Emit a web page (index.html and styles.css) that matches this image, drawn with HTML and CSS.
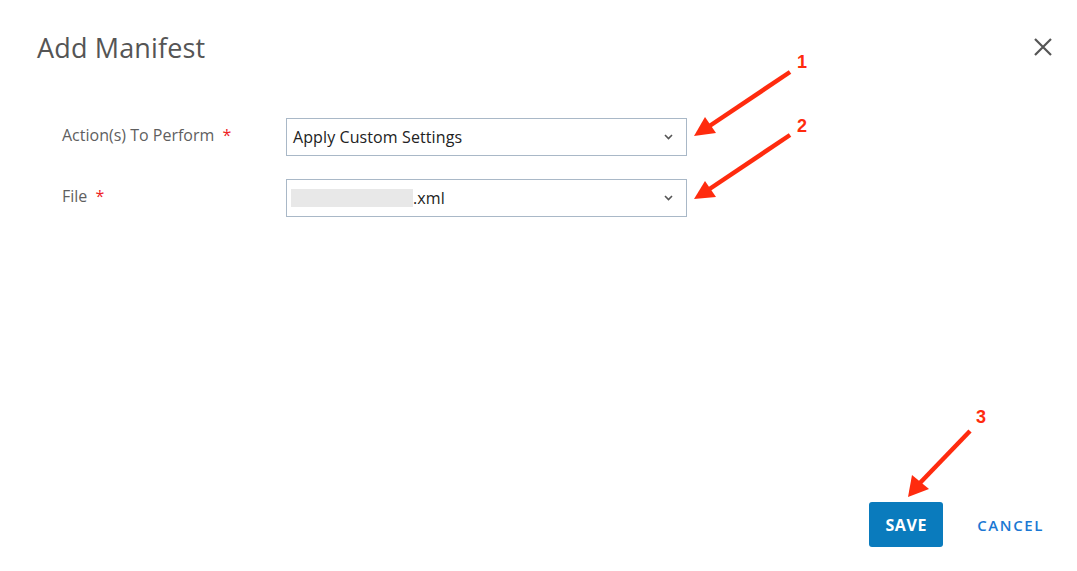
FILE: index.html
```html
<!DOCTYPE html>
<html lang="en">
<head>
<meta charset="utf-8">
<title>Add Manifest</title>
<link rel="stylesheet" href="styles.css">
</head>
<body>
<div class="dialog">
  <header class="dialog-header">
    <h1 class="dialog-title">Add Manifest</h1>
    <button class="close-btn" aria-label="Close">
      <svg width="18" height="18" viewBox="0 0 18 18"><path d="M1 1 L17 17 M17 1 L1 17" stroke="#555" stroke-width="2.2" fill="none"/></svg>
    </button>
  </header>

  <form class="form">
    <div class="form-row">
      <label class="form-label">Action(s) To Perform <span class="req">*</span></label>
      <div class="select">
        <span class="select-value">Apply Custom Settings</span>
        <svg class="chevron" width="9" height="6" viewBox="0 0 9 6"><path d="M1 1 L4.5 4.5 L8 1" stroke="#555" stroke-width="1.6" fill="none"/></svg>
      </div>
    </div>
    <div class="form-row">
      <label class="form-label">File <span class="req">*</span></label>
      <div class="select">
        <span class="select-value"><span class="redacted"></span>.xml</span>
        <svg class="chevron" width="9" height="6" viewBox="0 0 9 6"><path d="M1 1 L4.5 4.5 L8 1" stroke="#555" stroke-width="1.6" fill="none"/></svg>
      </div>
    </div>
  </form>

  <footer class="dialog-footer">
    <button class="btn btn-primary">SAVE</button>
    <button class="btn btn-link">CANCEL</button>
  </footer>

  <svg class="annotations" width="1077" height="571" viewBox="0 0 1077 571">
    <g fill="#ff2b0e" stroke="none">
      <line x1="790" y1="72" x2="708" y2="127" stroke="#ff2b0e" stroke-width="4.5"/>
      <polygon points="694,136 705,117 716,133"/>
      <line x1="790" y1="135" x2="708" y2="190" stroke="#ff2b0e" stroke-width="4.5"/>
      <polygon points="694,199 705,181 716,197"/>
      <line x1="970" y1="431" x2="918" y2="485" stroke="#ff2b0e" stroke-width="4.5"/>
      <polygon points="908,497 912,475 929,489"/>
    </g>
    <g class="num">
      <text x="797" y="68">1</text>
      <text x="797" y="132">2</text>
      <text x="976" y="423">3</text>
    </g>
  </svg>
</div>
</body>
</html>
```

FILE: styles.css
```css
* { box-sizing: border-box; }

html, body {
  margin: 0;
  padding: 0;
  background: #fff;
}

body {
  font-family: "Open Sans", "Liberation Sans", sans-serif;
  color: #555;
}

.dialog {
  position: relative;
  width: 1077px;
  height: 571px;
  display: flex;
  flex-direction: column;
  overflow: hidden;
}

.dialog-header {
  display: flex;
  justify-content: space-between;
  align-items: flex-start;
  padding: 30px 25px 0 37px;
}

.dialog-title {
  margin: 0;
  font-size: 27px;
  font-weight: 400;
  line-height: 36px;
  letter-spacing: 0.15px;
  color: #555;
}

.close-btn {
  border: 0;
  background: none;
  padding: 0;
  margin-top: 8px;
  width: 18px;
  height: 18px;
  cursor: pointer;
  display: flex;
}

.form {
  margin-top: 52px;
  padding-left: 62px;
  display: flex;
  flex-direction: column;
  gap: 23px;
}

.form-row {
  display: grid;
  grid-template-columns: 224px 401px;
  align-items: center;
}

.form-label {
  font-size: 16px;
  line-height: 22px;
  color: #5f5f5f;
  padding-bottom: 4px;
}

.req {
  color: #ee1c25;
  margin-left: 4px;
}

.select {
  height: 38px;
  border: 1px solid #a9b8c7;
  display: flex;
  align-items: center;
  justify-content: space-between;
  padding: 0 13px 0 6px;
  background: #fff;
}

.select-value {
  font-size: 16px;
  line-height: 22px;
  letter-spacing: 0.1px;
  color: #222;
  display: flex;
  align-items: center;
}

.redacted {
  display: inline-block;
  width: 122px;
  height: 18px;
  background: #e8e8e8;
  margin-left: -2px;
}

.chevron {
  display: block;
}

.dialog-footer {
  margin-top: auto;
  display: flex;
  justify-content: flex-end;
  align-items: center;
  padding: 0 17px 24px 0;
}

.btn {
  font-family: "Open Sans", "Liberation Sans", sans-serif;
  border: 0;
  cursor: pointer;
  font-weight: 700;
  font-size: 15px;
  letter-spacing: 1px;
}

.btn-primary {
  background: #0a7bbd;
  color: #fff;
  height: 45px;
  width: 74px;
  padding: 0;
  border-radius: 3px;
  font-size: 16px;
  letter-spacing: 0.6px;
}

.btn-link {
  background: none;
  color: #1b78d3;
  font-weight: 600;
  letter-spacing: 1.6px;
  margin-left: 18px;
  padding: 0 16px;
  height: 45px;
}

.annotations {
  position: absolute;
  left: 0;
  top: 0;
  pointer-events: none;
}

.annotations .num text {
  font-family: "Liberation Sans", Arial, sans-serif;
  font-weight: 700;
  font-size: 18px;
  fill: #ff2b0e;
}
```
